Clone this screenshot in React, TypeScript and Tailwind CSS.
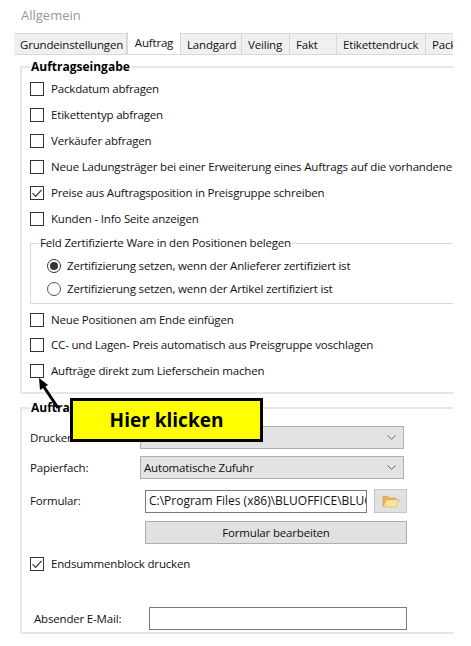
import type { ReactNode } from "react";
import { ChevronDown } from "lucide-react";

const tabs = [
  { name: "Grundeinstellungen", width: "w-[113px]" },
  { name: "Auftrag", width: "w-[54px]", active: true },
  { name: "Landgard", width: "w-[61px]" },
  { name: "Veiling", width: "w-[48px]" },
  { name: "Fakt", width: "w-[47px]" },
  { name: "Etikettendruck", width: "w-[89px]" },
  { name: "Packliste", width: "w-[60px]" },
];

function CheckRow({ label, checked, className }: { label: string; checked?: boolean; className?: string }) {
  return (
    <div className={`flex items-center gap-[7px] whitespace-nowrap ${className ?? "h-[26px]"}`}>
      <span className="flex h-[14px] w-[14px] shrink-0 items-center justify-center border border-[#333] bg-white">
        {checked && (
          <svg viewBox="0 0 12 12" className="h-[12px] w-[12px]" fill="none" stroke="#333" strokeWidth="1.2">
            <path d="M1.5 6.2 4.6 9.3 10.6 2.8" />
          </svg>
        )}
      </span>
      <span>{label}</span>
    </div>
  );
}

function RadioRow({ label, checked }: { label: string; checked?: boolean }) {
  return (
    <div className="flex h-[23px] items-center gap-[6px] whitespace-nowrap">
      <span className={`flex h-[14px] w-[14px] shrink-0 items-center justify-center rounded-full border ${checked ? "border-[#333]" : "border-[#555]"}`}>
        {checked && <span className="h-[8px] w-[8px] rounded-full bg-[#333]" />}
      </span>
      <span>{label}</span>
    </div>
  );
}

function Select({ value }: { value: string }) {
  return (
    <div className="flex h-[23px] w-[264px] items-center justify-between border border-[#adadad] bg-[#e3e3e3] pl-[3px] pr-[4px]">
      <span className="overflow-hidden pt-[1px] whitespace-nowrap">{value}</span>
      <ChevronDown size={15} strokeWidth={1.2} className="text-[#444]" />
    </div>
  );
}

function FormRow({ label, children, className }: { label: string; children: ReactNode; className?: string }) {
  return (
    <div className={`flex items-center ${className ?? ""}`}>
      <span className="w-[110px] shrink-0">{label}</span>
      {children}
    </div>
  );
}

export default function App() {
  return (
    <div
      className="h-[646px] w-[471px] overflow-hidden bg-white text-[11.5px] leading-[16px] tracking-[-0.18px] text-[#111]"
      style={{ fontFamily: '"Open Sans", "Noto Sans", sans-serif' }}
    >
      <div className="flex h-[32px] items-start pl-[21px] pt-[7px] text-[13px] tracking-normal text-[#999]">Allgemein</div>

      <div className="relative ml-[14px] w-[439px] overflow-hidden">
        <div className="flex h-[23px] items-end border-b border-[#d9d9d9]">
          {tabs.map((tab) =>
            tab.active ? (
              <div key={tab.name} className={`${tab.width} flex h-[23px] shrink-0 justify-center border border-b-0 border-[#d9d9d9] bg-white pt-[3px] whitespace-nowrap`}>
                {tab.name}
              </div>
            ) : (
              <div key={tab.name} className={`${tab.width} flex h-[21px] shrink-0 items-center border-r border-t border-[#d9d9d9] bg-[#f0f0f0] pl-[6px] pt-[2px] whitespace-nowrap`}>
                {tab.name}
              </div>
            ),
          )}
        </div>

        <div className="mt-[4px] w-[470px] pl-[6px]">
          <fieldset className="h-[335px] border-2 border-[#e6e6e6] pl-[8px] pt-[1px]">
            <legend className="px-[1px] text-[12px] font-bold tracking-normal text-black">Auftragseingabe</legend>
            <CheckRow label="Packdatum abfragen" />
            <CheckRow label="Etikettentyp abfragen" />
            <CheckRow label="Verkäufer abfragen" />
            <CheckRow label="Neue Ladungsträger bei einer Erweiterung eines Auftrags auf die vorhandene Position buchen" />
            <CheckRow label="Preise aus Auftragsposition in Preisgruppe schreiben" checked />
            <CheckRow label="Kunden - Info Seite anzeigen" />

            <fieldset className="mt-[3px] h-[69px] border border-[#d9d9d9] pl-[16px] pt-[3px]">
              <legend className="-ml-[8px] px-[1px]">Feld Zertifizierte Ware in den Positionen belegen</legend>
              <RadioRow label="Zertifizierung setzen, wenn der Anlieferer zertifiziert ist" checked />
              <RadioRow label="Zertifizierung setzen, wenn der Artikel zertifiziert ist" />
            </fieldset>

            <CheckRow label="Neue Positionen am Ende einfügen" className="mt-[3px] h-[25px]" />
            <CheckRow label="CC- und Lagen- Preis automatisch aus Preisgruppe voschlagen" className="h-[26px]" />
            <CheckRow label="Aufträge direkt zum Lieferschein machen" />
          </fieldset>

          <fieldset className="mt-[6px] h-[234px] border-2 border-[#e6e6e6] pl-[8px]">
            <legend className="px-[1px] text-[12px] font-bold tracking-normal text-black">Auftragsdruck</legend>
            <FormRow label="Drucker:" className="mt-[10px]">
              <Select value="Brother DCP-7055W" />
            </FormRow>
            <FormRow label="Papierfach:" className="mt-[7px]">
              <Select value="Automatische Zufuhr" />
            </FormRow>
            <FormRow label="Formular:" className="mt-[10px]">
              <div className="ml-[5px] flex h-[23px] w-[222px] items-center overflow-hidden border border-[#7a7a7a] bg-white pl-[3px] text-[12px] tracking-normal whitespace-nowrap">
                C:\Program Files (x86)\BLUOFFICE\BLUOFFICE.rpt
              </div>
              <div className="ml-[7px] flex h-[24px] w-[33px] items-center justify-center border border-[#c4c4c4] bg-[#e1e1e1]">
                <svg viewBox="0 0 18 14" className="h-[14px] w-[18px]">
                  <path d="M1 2.5h5l1.5 1.5H14v2H4.5L1 12.5z" fill="#e8b45a" stroke="#d29a3c" strokeWidth="0.6" />
                  <path d="M4.5 5.8H17.2L14.5 13H1.2z" fill="#fae39c" stroke="#dfae52" strokeWidth="0.6" />
                </svg>
              </div>
            </FormRow>
            <div className="ml-[115px] mt-[8px] flex h-[23px] w-[262px] items-center justify-center border border-[#adadad] bg-[#e1e1e1]">
              Formular bearbeiten
            </div>
            <CheckRow label="Endsummenblock drucken" className="mt-[7px] h-[26px]" checked />
            <div className="mt-[30px] flex items-center pl-[4px]">
              <span className="w-[115px] shrink-0">Absender E-Mail:</span>
              <div className="h-[23px] w-[258px] border border-[#7a7a7a] bg-white" />
            </div>
          </fieldset>
        </div>
      </div>

      <svg className="absolute left-[34px] top-[374px] h-[40px] w-[34px]" viewBox="0 0 34 40" fill="none">
        <path d="M24 34 8 10" stroke="#000" strokeWidth="3" />
        <path d="M5 4 14 11 6 16z" fill="#000" />
      </svg>
      <div className="absolute left-[70px] top-[398px] flex h-[44px] w-[193px] items-center justify-center border-[3px] border-black bg-[#ffff00] pb-[1px] text-[19px] font-bold tracking-normal text-black">
        Hier klicken
      </div>
    </div>
  );
}
